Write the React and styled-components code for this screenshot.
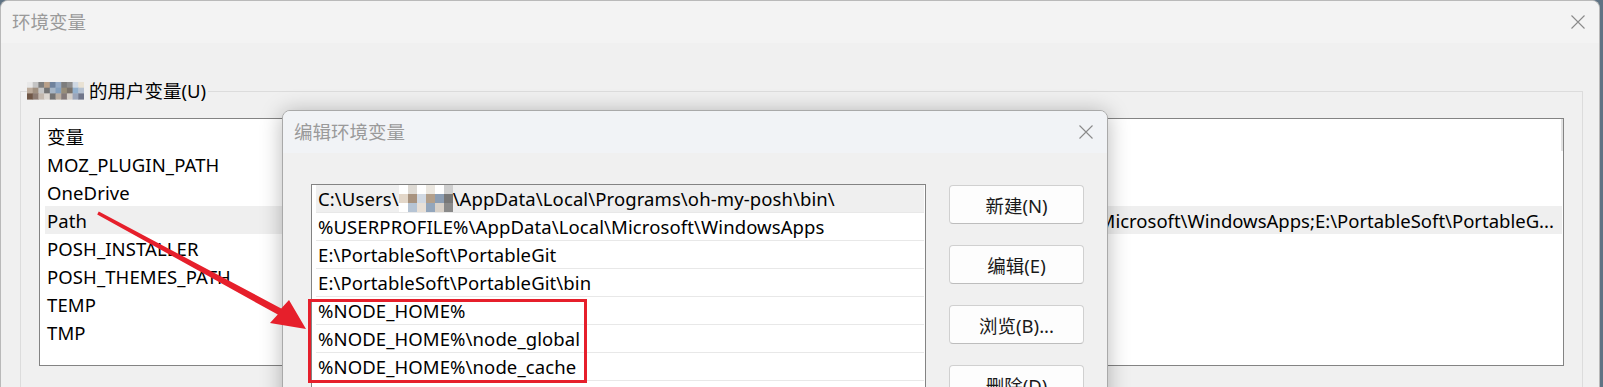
import React from 'react';
import styled, { createGlobalStyle } from 'styled-components';

const GlobalStyle = createGlobalStyle`
  html, body { margin: 0; padding: 0; }
  body {
    width: 1603px;
    height: 387px;
    overflow: hidden;
    background: #5f7384;
    font-family: "Noto Sans", "Noto Sans CJK SC", sans-serif;
    font-size: 18.5px;
    letter-spacing: 0.1px;
    color: #000;
  }
`;

const Page = styled.div`
  position: relative;
  width: 1603px;
  height: 387px;
  overflow: hidden;
`;

const Window = styled.div`
  width: 1600px;
  height: 420px;
  box-sizing: border-box;
  background: #f0f0f0;
  border: 1px solid #b9b9b9;
  border-bottom: none;
  border-radius: 8px 8px 0 0;
  overflow: hidden;
`;

const TitleBar = styled.div`
  height: 42px;
  display: flex;
  align-items: center;
  justify-content: space-between;
  padding: 0 14px 0 11px;
  background: ${p => p.$bg || '#f3f3f3'};
  color: #9a9a9a;
  line-height: 1;
  letter-spacing: 0;
`;

const WindowBody = styled.div`
  padding: 36px 16px 0 19px;
`;

const GroupBox = styled.fieldset`
  margin: 0;
  padding: 0 18px 0 6px;
  border: 1px solid #dcdcdc;
  height: 400px;
  box-sizing: border-box;
`;

const Legend = styled.legend`
  padding: 0 2px 0 0;
  height: 24px;
  line-height: 24px;
  display: flex;
  align-items: center;
  gap: 5px;
  letter-spacing: 0;
`;

const ListView = styled.div`
  margin: 15px 0 0 12px;
  height: 248px;
  box-sizing: border-box;
  border: 1px solid #838383;
  background: #fff;
  padding: 3px 1px 0 5px;
  position: relative;
`;

const ScrollHint = styled.div`
  position: absolute;
  right: 0;
  top: 0;
  width: 2px;
  height: 32px;
  background: #e2e2e2;
`;

const Row = styled.div`
  height: 28px;
  display: flex;
  align-items: center;
  background: ${p => (p.$selected ? '#efefef' : 'transparent')};
  white-space: nowrap;
`;

const NameCell = styled.div`
  width: 300px;
  padding-left: 2px;
  flex-shrink: 0;
`;

const ValueCell = styled.div`
  flex: 1;
  min-width: 0;
  display: flex;
  justify-content: flex-end;
  overflow: hidden;
  padding-right: 8px;
  letter-spacing: 0;
`;

const Dialog = styled.div`
  position: absolute;
  left: 282px;
  top: 110px;
  width: 826px;
  height: 320px;
  box-sizing: border-box;
  background: #f0f0f0;
  border: 1px solid #a9a9a9;
  border-radius: 8px 8px 0 0;
  box-shadow: 0 2px 22px rgba(0, 0, 0, 0.28);
  overflow: hidden;
`;

const DialogBody = styled.div`
  display: flex;
  align-items: flex-start;
  padding: 31px 0 0 28px;
  gap: 23px;
`;

const PathList = styled.div`
  width: 615px;
  height: 260px;
  box-sizing: border-box;
  border: 1px solid #838383;
  background: #fff;
  padding: 0 1px 0 4px;
`;

const PathItem = styled.div`
  height: 27px;
  display: flex;
  align-items: center;
  padding-left: 2px;
  border-bottom: 1px solid #e8e8e8;
  background: ${p => (p.$selected ? '#efefef' : '#fff')};
  white-space: nowrap;
`;

const ButtonColumn = styled.div`
  display: flex;
  flex-direction: column;
  gap: 21px;
  margin-top: 1px;
`;

const Button = styled.button`
  width: 135px;
  height: 39px;
  box-sizing: border-box;
  border: 1px solid #d0d0d0;
  border-bottom-color: #bdbdbd;
  border-radius: 4px;
  background: #fdfdfd;
  font: inherit;
  letter-spacing: 0;
  color: #1a1a1a;
  padding: 0;
`;

const Highlight = styled.div`
  position: absolute;
  left: 308px;
  top: 299px;
  width: 279px;
  height: 84px;
  box-sizing: border-box;
  border: 3px solid #e61f2b;
`;

const ArrowLayer = styled.svg`
  position: absolute;
  left: 0;
  top: 0;
  pointer-events: none;
`;

const CloseIcon = ({ size = 14 }) => (
  <svg width={size} height={size} viewBox="0 0 14 14">
    <path d="M0.5 0.5 L13.5 13.5 M13.5 0.5 L0.5 13.5" stroke="#8a8a8a" strokeWidth="1.1" fill="none" />
  </svg>
);

// pixelated user name blocks
const Mosaic = ({ cells, size }) => (
  <svg width={cells[0].length * size} height={cells.length * size} style={{ display: 'block' }}>
    {cells.map((row, y) =>
      row.map((c, x) => <rect key={`${x}-${y}`} x={x * size} y={y * size} width={size + 0.5} height={size + 0.5} fill={c} />)
    )}
  </svg>
);

const legendCells = [
  ['#e8e8e8', '#c4c4c4', '#7e7e7e', '#b9a089', '#6f829c', '#96abc6', '#7d7d7d', '#8f8f8f', '#cfd8e3', '#e9e2d4'],
  ['#bcab9b', '#a09080', '#c6c6c6', '#747474', '#a6b5c5', '#85a0bd', '#978d7a', '#7b736b', '#93b0cd', '#b7c2d1'],
  ['#6f5646', '#8c7b72', '#c3b8ae', '#dcd6d0', '#737373', '#b9aea2', '#847a7a', '#d4cec8', '#9ca6ba', '#70768a'],
];

const pathCells = [
  ['#ffffff', '#dedad4', '#ffffff', '#ebe7e0', '#ffffff', '#cfcfcf'],
  ['#e3d7c9', '#a8937f', '#d1d9e3', '#b29f8b', '#8b9db3', '#777777'],
  ['#ffffff', '#b6c4d4', '#e8e0d7', '#93a6bc', '#d8d1c9', '#8a8a8a'],
];

const userRows = [
  { name: '变量' },
  { name: 'MOZ_PLUGIN_PATH' },
  { name: 'OneDrive' },
  { name: 'Path', value: 'l\\Microsoft\\WindowsApps;E:\\PortableSoft\\PortableG...', selected: true },
  { name: 'POSH_INSTALLER' },
  { name: 'POSH_THEMES_PATH' },
  { name: 'TEMP' },
  { name: 'TMP' },
];

const paths = [
  '%USERPROFILE%\\AppData\\Local\\Microsoft\\WindowsApps',
  'E:\\PortableSoft\\PortableGit',
  'E:\\PortableSoft\\PortableGit\\bin',
  '%NODE_HOME%',
  '%NODE_HOME%\\node_global',
  '%NODE_HOME%\\node_cache',
  '',
];

const buttons = ['新建(N)', '编辑(E)', '浏览(B)...', '删除(D)'];

export default function App() {
  return (
    <Page>
      <GlobalStyle />
      <Window>
        <TitleBar>
          <span>环境变量</span>
          <CloseIcon />
        </TitleBar>
        <WindowBody>
          <GroupBox>
            <Legend>
              <Mosaic cells={legendCells} size={5.7} />
              <span>的用户变量(U)</span>
            </Legend>
            <ListView>
              {userRows.map(r => (
                <Row key={r.name} $selected={r.selected}>
                  <NameCell>{r.name}</NameCell>
                  <ValueCell>{r.value && <span>{r.value}</span>}</ValueCell>
                </Row>
              ))}
              <ScrollHint />
            </ListView>
          </GroupBox>
        </WindowBody>
      </Window>

      <Dialog>
        <TitleBar $bg="#f1f3f6">
          <span>编辑环境变量</span>
          <CloseIcon />
        </TitleBar>
        <DialogBody>
          <PathList>
            <PathItem $selected>
              C:\Users\
              <Mosaic cells={pathCells} size={9} />
              \AppData\Local\Programs\oh-my-posh\bin\
            </PathItem>
            {paths.map((p, i) => (
              <PathItem key={i}>{p}</PathItem>
            ))}
          </PathList>
          <ButtonColumn>
            {buttons.map(b => (
              <Button key={b} type="button">{b}</Button>
            ))}
          </ButtonColumn>
        </DialogBody>
      </Dialog>

      <Highlight />

      <ArrowLayer width="1603" height="387" viewBox="0 0 1603 387">
        <polygon
          points="98.8,211.6 281.2,308.4 289,300 306,329 270,323 277.8,314.6 97.2,214.4"
          fill="#e61f2b"
        />
      </ArrowLayer>
    </Page>
  );
}
